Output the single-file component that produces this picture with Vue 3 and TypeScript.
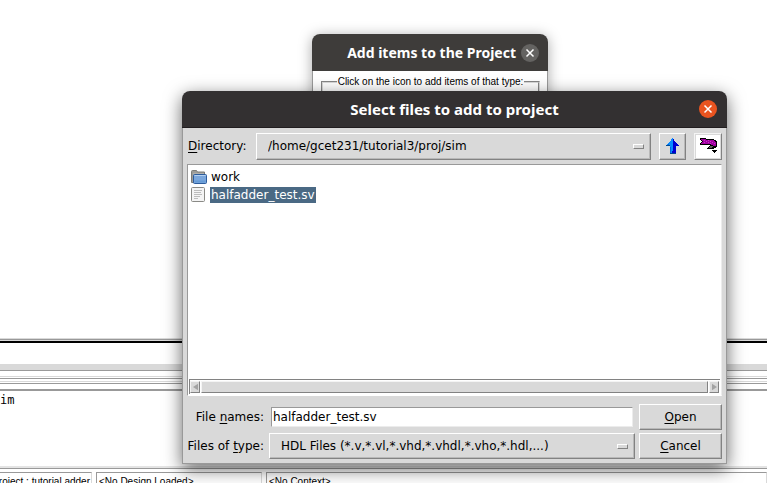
<script setup lang="ts">
import { ref } from 'vue'

interface Entry {
  name: string
  kind: 'folder' | 'file'
}

const directories: string[] = ['/home/gcet231/tutorial3/proj/sim']
const directory = ref(directories[0])
const fileTypes: string[] = ['HDL Files (*.v,*.vl,*.vhd,*.vhdl,*.vho,*.hdl,...)']
const fileType = ref(fileTypes[0])
const entries: Entry[] = [
  { name: 'work', kind: 'folder' },
  { name: 'halfadder_test.sv', kind: 'file' },
]
const fileName = ref('halfadder_test.sv')
const status: string[] = ['Project : tutorial adder', '<No Design Loaded>', '<No Context>']

function choose(entry: Entry): void {
  if (entry.kind === 'file') fileName.value = entry.name
}
</script>

<template>
  <div class="desktop">
    <main class="workspace">
      <div class="pane"></div>
      <div class="sash"></div>
      <div class="strip"></div>
      <div class="divider"></div>
      <div class="tabs"><i></i><i></i></div>
      <div class="console">im</div>
      <footer class="status">
        <div v-for="item in status" :key="item" class="cell"><span>{{ item }}</span></div>
      </footer>
    </main>

    <section class="window items">
      <header class="titlebar">
        <h2>Add items to the Project</h2>
        <button class="close" type="button" aria-label="Close">
          <svg viewBox="0 0 18 18"><path d="M5.5 5.5l7 7M12.5 5.5l-7 7" /></svg>
        </button>
      </header>
      <div class="items-body">
        <fieldset>
          <legend>Click on the icon to add items of that type:</legend>
        </fieldset>
      </div>
    </section>

    <section class="window picker">
      <header class="titlebar">
        <h1>Select files to add to project</h1>
        <button class="close" type="button" aria-label="Close">
          <svg viewBox="0 0 18 18"><path d="M5.5 5.5l7 7M12.5 5.5l-7 7" /></svg>
        </button>
      </header>
      <form class="body" @submit.prevent>
        <div class="toolbar">
          <label for="directory"><u>D</u>irectory:</label>
          <div class="menu">
            <select id="directory" v-model="directory" class="raised">
              <option v-for="d in directories" :key="d">{{ d }}</option>
            </select>
            <i class="knob"></i>
          </div>
          <button class="raised tool" type="button" aria-label="Up one directory">
            <svg width="13" height="16" viewBox="0 0 13 16" shape-rendering="crispEdges">
              <path fill="#0a8cff" d="M6 0h1v16H4V8H0V7h1V6h1V5h1V4h1V3h1V1h1z" />
              <path fill="#0000d0" d="M7 1h1v2h1v1h1v1h1v1h1v1h1v1H10v7H6v-2h1z" />
              <path fill="#004890" d="M0 7h4v1H0zM4 15h6v1H4z" />
              <path fill="#0068e0" d="M4 9h1v6H4zM2 6h1v1H2z" />
            </svg>
          </button>
          <button class="raised tool recent" type="button" aria-label="Recent directories">
            <svg width="17" height="16" viewBox="0 0 17 16" shape-rendering="crispEdges">
              <path fill="#000" d="M0 0h6v1h8v1h2v1h1v6h-1v1h-2v1H7v-1h1V9h1V8h1V7H0V5h1V4h1V3H1V2H0z" />
              <path fill="#a000a0" d="M1 1h5v1h8v1h1v1h1v4h-3V7h-2V6H1V5h1V4h1V3H2V2H1z" />
              <path fill="#cc30cc" d="M4 2h1v1H4zM6 3h1v1H6zM8 2h1v1H8zM10 3h1v1h-1zM12 4h1v1h-1zM8 4h1v1H8zM4 4h1v1H4zM14 5h1v1h-1zM10 5h1v1h-1z" />
              <path fill="#606060" d="M10 8h3v1h-1v1H9V9h1z" />
              <path fill="#000" d="M12 12h5v1h-1v1h-1v1h-1v-1h-1v-1h-1z" />
            </svg>
          </button>
        </div>

        <div class="list">
          <ul>
            <li v-for="entry in entries" :key="entry.name">
              <svg v-if="entry.kind === 'folder'" width="16" height="16" viewBox="0 0 16 16">
                <path d="M.5 13.5V2.5q0-1 1-1h4l1 1.500h7v4M.5 13.500h3" fill="#9c9c98" stroke="#7c7c78" />
                <path d="M2 13V4h11v2" fill="#b0b0ac" />
                <rect x="2.500" y="5.500" width="13" height="9" rx="1" fill="#7ba7dc" stroke="#2d5c9c" />
                <path d="M3.500 6.500h11" stroke="#b4d0f0" />
                <path d="M3.500 12.500h11" stroke="#669bd6" stroke-width="2" />
              </svg>
              <svg v-else width="16" height="16" viewBox="0 0 16 16">
                <rect x=".5" y=".5" width="13" height="14" rx="1" fill="#f4f4f4" stroke="#8a8a86" />
                <path d="M3 3.500h8M3 5.500h7M3 7.500h8M3 9.500h6M3 11.500h4" stroke="#bcbcbc" />
              </svg>
              <button
                type="button"
                :class="{ selected: entry.name === fileName }"
                @click="choose(entry)"
              >{{ entry.name }}</button>
            </li>
          </ul>
          <div class="scrollbar">
            <span class="arrow"><svg viewBox="0 0 6 8"><path d="M6 0v8L0 4z" /></svg></span>
            <span class="thumb"></span>
            <span class="arrow"><svg viewBox="0 0 6 8"><path d="M0 0v8l6-4z" /></svg></span>
          </div>
        </div>

        <div class="fields">
          <label for="names">File <u>n</u>ames:</label>
          <input id="names" v-model="fileName" type="text" />
          <button class="raised" type="submit"><span><u>O</u>pen</span></button>
          <label for="types">Files of <u>t</u>ype:</label>
          <div class="menu">
            <select id="types" v-model="fileType" class="raised">
              <option v-for="t in fileTypes" :key="t">{{ t }}</option>
            </select>
            <i class="knob"></i>
          </div>
          <button class="raised" type="button"><span><u>C</u>ancel</span></button>
        </div>
      </form>
    </section>
  </div>
</template>

<style>
body {
  margin: 0;
  overflow: hidden;
}
</style>

<style scoped>
* {
  box-sizing: border-box;
}

.desktop {
  position: relative;
  height: 100vh;
  overflow: hidden;
  background: #fff;
  color: #000;
  font: 12px/16px "DejaVu Sans", "Noto Sans", sans-serif;
}

.workspace {
  display: flex;
  flex-direction: column;
  height: 100%;
}

.pane {
  flex: 1;
  border-bottom: 1px solid #d9d9d9;
}

.sash {
  height: 4px;
  border-top: 1px solid #999;
  border-bottom: 2px solid #000;
  background: #d9d9d9;
}

.strip {
  height: 21px;
}

.divider {
  height: 7px;
  background: #d9d9d9;
  border-bottom: 1px solid #999;
}

.tabs {
  display: flex;
  flex-direction: column;
  gap: 2px;
  height: 18px;
  padding-top: 5px;
}

.tabs i {
  height: 3px;
  border-top: 1px solid #d9d9d9;
  border-bottom: 1px solid #999;
}

.console {
  height: 79px;
  border-top: 2px solid #999;
  border-bottom: 2px solid #e4e4e4;
  font: 12px/18px "DejaVu Sans Mono", monospace;
}

.status {
  display: flex;
  gap: 4px;
  height: 15px;
  padding-top: 3px;
  border-top: 1px solid #999;
  overflow: hidden;
  font: 10px/18px "Liberation Sans", Arial, sans-serif;
  white-space: nowrap;
}

.cell {
  display: flex;
  min-width: 0;
  height: 20px;
  padding-left: 2px;
  border: 1px solid #999;
  border-right-color: #d9d9d9;
}

.cell:first-child {
  flex: 0 0 92px;
  justify-content: flex-end;
  border-left: 0;
  padding: 0 1px 0 0;
}

.cell:nth-child(2) {
  flex: 0 0 166px;
}

.cell:last-child {
  flex: 1;
}

.window {
  position: absolute;
  display: flex;
  flex-direction: column;
  border-radius: 8px 8px 0 0;
}

.items {
  top: 34px;
  left: 312px;
  width: 236px;
  box-shadow: 0 2px 14px rgba(0, 0, 0, 0.35);
}

.picker {
  top: 91px;
  left: 182px;
  right: 40px;
  bottom: 19px;
  box-shadow: 0 5px 18px rgba(0, 0, 0, 0.6);
}

.titlebar {
  display: grid;
  grid-template-columns: 18px 1fr 18px;
  align-items: center;
  height: 37px;
  padding: 0 10px;
  border-radius: 8px 8px 0 0;
  border-bottom: 1px solid #211d1f;
  background: #333031;
  color: #fff;
}

.items .titlebar {
  grid-template-columns: 1fr 18px;
  gap: 5px;
  padding: 0 9px;
  border-bottom: 0;
  background: #3e3c3a;
}

h1,
h2 {
  margin: 0;
  font: bold 15px/20px "Noto Sans", "Open Sans", sans-serif;
  white-space: nowrap;
}

h1 {
  grid-column: 2;
  text-align: center;
}

h2 {
  font-size: 14px;
  text-align: right;
}

.close {
  display: block;
  width: 18px;
  height: 18px;
  padding: 0;
  border: 0;
  border-radius: 50%;
  background: #e95420;
}

.items .close {
  background: #646361;
}

.close svg {
  display: block;
  fill: none;
  stroke: #fff;
  stroke-width: 1.5;
}

.items-body {
  height: 120px;
  padding: 3px 7px 3px 8px;
  background: #fff;
  border: 1px solid #999;
  border-top: 0;
}

fieldset {
  height: 100px;
  margin: 0;
  padding: 0;
  border: 2px groove #d9d9d9;
}

legend {
  margin: 0 auto;
  padding: 0 1px;
  font: 10px/16px "Liberation Sans", Arial, sans-serif;
  white-space: nowrap;
}

.body {
  display: flex;
  flex: 1;
  flex-direction: column;
  min-height: 0;
  padding: 4px;
  border: 1px solid #999;
  border-top: 0;
  background: #d9d9d9;
}

.toolbar {
  display: grid;
  grid-template-columns: 60px 1fr 27px 28px;
  column-gap: 8px;
  align-items: center;
  height: 28px;
  margin-bottom: 4px;
  padding-left: 1px;
}

.raised {
  margin: 0;
  border: 1px solid;
  border-color: #fff #828282 #828282 #fff;
  border-radius: 0;
  box-shadow: inset -1px -1px #b8b8b8;
  background: #d9d9d9;
  color: #000;
  font: inherit;
}

.menu {
  position: relative;
}

select {
  display: block;
  width: 100%;
  height: 27px;
  padding: 0 30px 0 11px;
  appearance: none;
}

.fields select {
  height: 26px;
}

.knob {
  position: absolute;
  top: 11px;
  right: 7px;
  width: 11px;
  height: 5px;
  border: 1px solid;
  border-color: #fff #828282 #828282 #fff;
}

.tool {
  display: grid;
  place-items: center;
  height: 27px;
  padding: 0;
}

.recent {
  background: #fff;
  border-color: #f4f4f4 #828282 #828282 #f4f4f4;
  box-shadow: inset 1px 1px #d9d9d9, inset -1px -1px #d9d9d9;
}

.list {
  display: flex;
  flex: 1;
  flex-direction: column;
  min-height: 0;
  padding: 1px;
  border: 1px solid #999;
  border-color: #999 #ececec #fff #999;
  background: #fff;
}

ul {
  flex: 1;
  margin: 0;
  padding: 2px;
  list-style: none;
}

li {
  display: flex;
  align-items: center;
  gap: 3px;
  height: 18px;
}

li button {
  height: 16px;
  padding: 0 1px;
  border: 0;
  background: none;
  color: #000;
  font: inherit;
  line-height: 16px;
}

li .selected {
  background: #4a6984;
  color: #fff;
}

.scrollbar {
  display: flex;
  gap: 1px;
  height: 15px;
  padding: 1px 1px 1px 0;
  border-top: 1px solid #828282;
  border-left: 1px solid #828282;
}

.arrow,
.thumb {
  border: 1px solid;
  border-color: #f4f4f4 #828282 #828282 #f4f4f4;
  background: #d9d9d9;
}

.thumb {
  flex: 1;
}

.arrow {
  display: grid;
  place-items: center;
  width: 10px;
}

.arrow svg {
  width: 5px;
  height: 8px;
  fill: #a3a3a3;
}

.fields {
  display: grid;
  grid-template-columns: 78px 1fr 83px;
  gap: 3px 4px;
  align-items: center;
  padding-top: 8px;
}

.fields label {
  padding-right: 1px;
  text-align: right;
  white-space: nowrap;
}

.fields .raised {
  min-height: 26px;
  text-align: left;
}

.fields button.raised {
  text-align: center;
}

input {
  min-width: 0;
  height: 20px;
  margin: 0 2px;
  padding: 0 1px;
  border: 1px solid;
  border-color: #999 #ececec #ececec #999;
  background: #fff;
  color: #000;
  font: inherit;
}

u {
  text-underline-offset: 2px;
}
</style>
